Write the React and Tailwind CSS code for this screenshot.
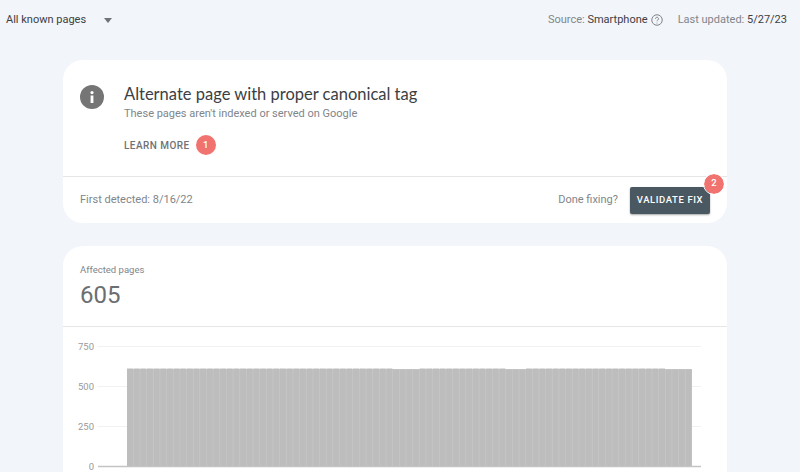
const bars = Array.from({ length: 85 }, (_, i) => {
  const x = 127 + i * 6.65;
  let top = 368.5;
  if (x >= 387 && x < 413) top = 369.5;
  if (x >= 506 && x < 526) top = 369.5;
  if (x >= 665) top = 369.5;
  return { x, top };
});

function Badge({ children, className = '' }) {
  return (
    <span className={`flex h-5 w-5 items-center justify-center rounded-full bg-[#f0736f] text-[9.5px] font-medium text-white ${className}`}>
      {children}
    </span>
  );
}

function Chart() {
  const labels = [
    ['750', 346],
    ['500', 386],
    ['250', 426],
    ['0', 466],
  ];
  return (
    <svg width="664" height="145" viewBox="63 327 664 145" className="block">
      {labels.map(([label, y]) => (
        <g key={label}>
          <line x1="98" x2="701" y1={y + 0.5} y2={y + 0.5} stroke={label === '0' ? '#c4c4c4' : '#f1f1f1'} strokeWidth={label === '0' ? 1.5 : 1} />
          <text x="94" y={y + 4} textAnchor="end" fontSize="9.5" fill="#9a9a9a" fontFamily="Roboto, sans-serif">
            {label}
          </text>
        </g>
      ))}
      <rect x="127" y="369" width="565" height="97" fill="#c8c8c8" />
      {bars.map((bar) => (
        <rect key={bar.x} x={bar.x} y={bar.top} width="6" height={466 - bar.top} fill="#bdbdbd" />
      ))}
    </svg>
  );
}

export default function App() {
  return (
    <div className="h-[472px] w-[800px] overflow-hidden bg-[#f2f5fa] font-['Roboto',sans-serif]">
      <header className="flex h-[60px] items-start justify-between pl-[6px] pr-[13px] pt-[12px] text-[11px]">
        <div className="flex items-center">
          <span className="text-[#3c4043]">All known pages</span>
          <span className="ml-[18px] mt-[1px] h-0 w-0 border-x-[4px] border-t-[5px] border-x-transparent border-t-[#6f7276]" />
        </div>
        <div className="flex items-center text-[#80868b]">
          <span>Source:&nbsp;</span>
          <span className="text-[#3c4043]">Smartphone</span>
          <svg width="12" height="12" viewBox="0 0 24 24" fill="none" stroke="#80868b" strokeWidth="2" className="ml-[3px]">
            <circle cx="12" cy="12" r="10.5" />
            <path d="M9 9.5a3 3 0 1 1 4.6 2.5c-1 .7-1.6 1.2-1.6 2.5" />
            <circle cx="12" cy="18" r="1" fill="#80868b" stroke="none" />
          </svg>
          <span className="ml-[15px]">Last updated:&nbsp;</span>
          <span className="text-[#3c4043]">5/27/23</span>
        </div>
      </header>

      <main className="mx-[63px] flex w-[664px] flex-col gap-[23px]">
        <section className="rounded-[20px] bg-white">
          <div className="flex h-[117px] border-b border-[#e6e6e6] pl-[17px] pt-[24px]">
            <svg width="24" height="24" viewBox="0 0 24 24" className="mt-[1px]">
              <circle cx="12" cy="12" r="12" fill="#757575" />
              <rect x="10.6" y="10.5" width="2.8" height="7.5" fill="#fff" />
              <circle cx="12" cy="7.6" r="1.6" fill="#fff" />
            </svg>
            <div className="ml-[20px]">
              <h1 className="font-['Lato',sans-serif] text-[16.5px] leading-[20px] text-[#3c4043]">Alternate page with proper canonical tag</h1>
              <p className="mt-[2px] text-[11px] leading-[16px] text-[#80868b]">These pages aren't indexed or served on Google</p>
              <div className="mt-[13px] flex items-center gap-[6px]">
                <span className="text-[10px] font-medium tracking-[0.45px] text-[#6f7276]">LEARN MORE</span>
                <Badge>1</Badge>
              </div>
            </div>
          </div>
          <div className="flex h-[46px] items-center justify-between px-[17px] text-[11px] text-[#80868b]">
            <span>First detected: 8/16/22</span>
            <div className="flex items-center">
              <span>Done fixing?</span>
              <div className="relative ml-[12px]">
                <button className="flex h-[27px] w-[80px] items-center justify-center rounded-[2px] bg-[#4a5862] text-[9.5px] font-medium tracking-[0.6px] text-white shadow-[0_1px_2px_rgba(0,0,0,0.35)]">
                  VALIDATE FIX
                </button>
                <Badge className="absolute right-[-14px] top-[-13px] z-10 outline outline-1 outline-white">2</Badge>
              </div>
            </div>
          </div>
        </section>

        <section className="rounded-t-[20px] bg-white">
          <div className="h-[81px] border-b border-[#e6e6e6] pl-[17px] pt-[17px]">
            <p className="text-[9.5px] leading-[14px] text-[#80868b]">Affected pages</p>
            <p className="mt-[3px] text-[24px] leading-[30px] text-[#6b6e72]">605</p>
          </div>
          <Chart />
        </section>
      </main>
    </div>
  );
}
